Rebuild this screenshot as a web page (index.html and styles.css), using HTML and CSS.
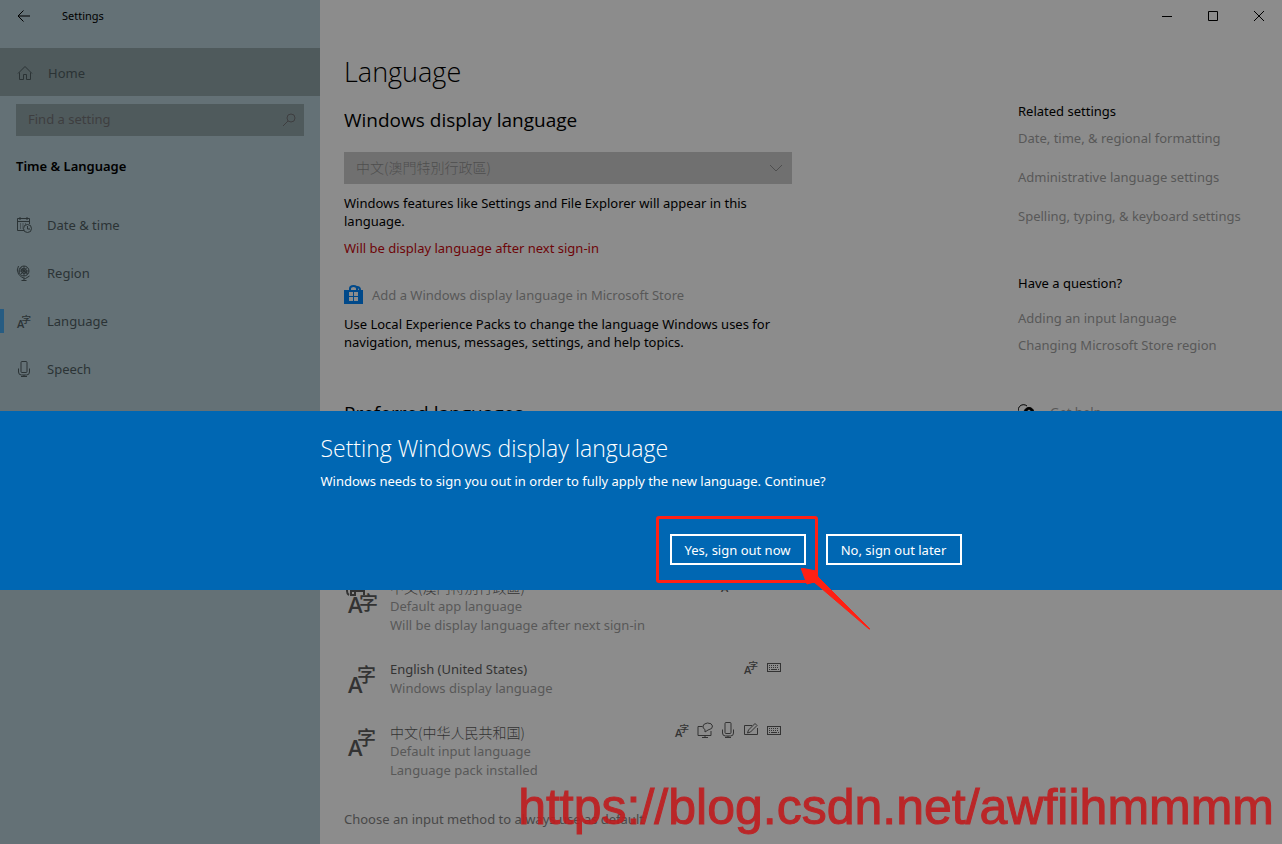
FILE: index.html
```html
<!DOCTYPE html>
<html lang="en">
<head>
<meta charset="utf-8">
<meta name="viewport" content="width=device-width, initial-scale=1">
<title>Settings</title>
<link rel="stylesheet" href="styles.css">
</head>
<body>
<svg class="sprite" aria-hidden="true">
  <symbol id="i-lang" viewBox="0 0 32 32">
    <text class="glyph-a" x="2" y="30">A</text>
    <text class="glyph-zi" x="11" y="19">字</text>
  </symbol>
  <symbol id="i-mic" viewBox="0 0 16 16">
    <rect x="5" y="0.5" width="6" height="11" rx="1"/>
    <path d="M2.500 7.500v3.500q0 3 3 3h5q3 0 3-3V7.500M8 14v2M5 15.500h6"/>
  </symbol>
  <symbol id="i-keys" viewBox="0 0 16 16">
    <rect x="1.500" y="4.500" width="13" height="8"/>
    <path d="M3 6.500h10M3 8.500h10" stroke-dasharray="1 1"/>
    <path d="M3 10.500h1M5 10.500h6M12 10.500h1"/>
  </symbol>
</svg>

<div class="window">
  <nav class="sidebar">
    <header class="titlebar">
      <button class="back" aria-label="Back">
        <svg class="icon" viewBox="0 0 16 16"><path d="M14 8H2.500M7.500 2.500L2 8l5.500 5.500"/></svg>
      </button>
      <span class="app-name">Settings</span>
    </header>
    <a class="home" href="#">
      <svg class="icon" viewBox="0 0 16 16"><path d="M1 8.500L8 1.500l7 7M2.500 7.500v7h4v-5h3v5h4v-7"/></svg>
      Home
    </a>
    <label class="search">
      <input type="text" placeholder="Find a setting" aria-label="Find a setting">
      <svg class="icon" viewBox="0 0 16 16"><circle cx="10" cy="6" r="4"/><path d="M7 9l-5 5"/></svg>
    </label>
    <h2 class="group">Time &amp; Language</h2>
    <ul class="menu">
      <li><a href="#">
        <svg class="icon" viewBox="0 0 16 16"><path d="M8 13.500H1.500v-12h12V7M1.500 4.500h12M4 0v3M11 0v3"/><path d="M4 7h7M4 9h4M4 11h3" stroke-dasharray="1 1.500"/><circle cx="11.500" cy="11.500" r="4"/><path d="M11.500 9v3H14"/></svg>
        Date &amp; time</a></li>
      <li><a href="#">
        <svg class="icon" viewBox="0 0 16 16"><circle cx="8" cy="6" r="5"/><path d="M4 3.500l8 5M5 9l6-6.500M5.500 2.500l5.500 7M8 1v10M3 6h10M2.500 1Q0 5 2.500 9t7 4.500l4-2.500M8 13v2M5.500 15.500h5"/><circle cx="8" cy="6" r="2.500"/></svg>
        Region</a></li>
      <li class="current"><a href="#" aria-current="page">
        <svg class="icon"><use href="#i-lang"/></svg>
        Language</a></li>
      <li><a href="#">
        <svg class="icon"><use href="#i-mic"/></svg>
        Speech</a></li>
    </ul>
  </nav>

  <div class="page">
    <div class="caption">
      <button aria-label="Minimize"><svg viewBox="0 0 12 12"><path d="M1 6.500h10"/></svg></button>
      <button aria-label="Maximize"><svg viewBox="0 0 12 12"><path d="M1.500 1.500h9v9h-9z"/></svg></button>
      <button aria-label="Close"><svg viewBox="0 0 12 12"><path d="M1 1l10 10M11 1L1 11"/></svg></button>
    </div>
    <div class="columns">
      <main class="content">
        <h1>Language</h1>
        <h2>Windows display language</h2>
        <select class="picker" aria-label="Windows display language">
          <option>中文(澳門特別行政區)</option>
        </select>
        <p class="note">Windows features like Settings and File Explorer will appear in this language.</p>
        <p class="warning">Will be display language after next sign-in</p>
        <a class="store" href="#">
          <svg class="bag" viewBox="0 0 20 20"><path d="M6 5V3.500Q6 1 9.500 1T13 3.500V5M13 2q3 0 3 3" class="handle"/><path class="body" d="M0 5h19v14H0z"/><path class="panes" d="M5 7h4v4H5zM10 7h4v4h-4zM5 12h4v4H5zM10 12h4v4h-4z"/></svg>
          Add a Windows display language in Microsoft Store
        </a>
        <p class="about">Use Local Experience Packs to change the language Windows uses for navigation, menus, messages, settings, and help topics.</p>
        <h2 class="preferred">Preferred languages</h2>
        <ul class="languages">
          <li>
            <svg class="lang" viewBox="0 0 32 32">
              <path class="plus" d="M1 4v6q0 3 2 4M5 7v7h4M5 10h13M9 4v11M13 4v7M18 7v7"/>
              <text class="glyph-a" x="2" y="32">A</text>
              <text class="glyph-zi" x="13" y="29">字</text>
            </svg>
            <div class="info"><strong>中文(澳門特別行政區)</strong><span>Default app language</span><span>Will be display language after next sign-in</span></div>
            <div class="features">
              <svg class="icon"><use href="#i-lang"/></svg>
              <svg class="icon"><use href="#i-keys"/></svg>
              <svg class="icon"><use href="#i-keys"/></svg>
            </div>
          </li>
          <li>
            <svg class="lang"><use href="#i-lang"/></svg>
            <div class="info"><strong>English (United States)</strong><span>Windows display language</span></div>
            <div class="features">
              <svg class="icon"><use href="#i-lang"/></svg>
              <svg class="icon"><use href="#i-keys"/></svg>
            </div>
          </li>
          <li>
            <svg class="lang"><use href="#i-lang"/></svg>
            <div class="info"><strong lang="zh-CN">中文(中华人民共和国)</strong><span>Default input language</span><span>Language pack installed</span></div>
            <div class="features">
              <svg class="icon"><use href="#i-lang"/></svg>
              <svg class="icon" viewBox="0 0 16 16"><path d="M5.500 4.500H1v9h13V9M5 15.500h6M8 13.500v2"/><path d="M8 7.500Q5.500 6.500 6 4t4.500-3q4.500 0 5 3t-4.500 4l-3 2z"/></svg>
              <svg class="icon"><use href="#i-mic"/></svg>
              <svg class="icon" viewBox="0 0 16 16"><path d="M9 3.500H1.500v9h13V6"/><path d="M4.500 11l1-3L12 1.500l2 2L7.500 10z"/></svg>
              <svg class="icon"><use href="#i-keys"/></svg>
            </div>
          </li>
        </ul>
        <a class="default-input" href="#">Choose an input method to always use as default</a>
      </main>
      <aside class="related">
        <h3>Related settings</h3>
        <ul class="spaced">
          <li><a href="#">Date, time, &amp; regional formatting</a></li>
          <li><a href="#">Administrative language settings</a></li>
          <li><a href="#">Spelling, typing, &amp; keyboard settings</a></li>
        </ul>
        <h3>Have a question?</h3>
        <ul class="questions">
          <li><a href="#">Adding an input language</a></li>
          <li><a href="#">Changing Microsoft Store region</a></li>
        </ul>
        <a class="help" href="#">
          <svg class="icon" viewBox="0 0 16 16"><path d="M2 10a5 5 0 1 1 7-8"/><circle class="solid" cx="11" cy="8.500" r="5"/><path class="mark" d="M9.500 7q1.500-2 3 0"/></svg>
          Get help
        </a>
      </aside>
    </div>
  </div>

  <section class="dialog" role="dialog" aria-labelledby="dialog-title">
    <div class="dialog-body">
      <h2 id="dialog-title">Setting Windows display language</h2>
      <p>Windows needs to sign you out in order to fully apply the new language. Continue?</p>
      <div class="actions">
        <div class="marked">
          <button>Yes, sign out now</button>
          <span class="frame"></span>
          <svg class="arrow" viewBox="0 0 70 62"><path d="M0 0l15 3 2 6 52 52h-1L13 14l-7 2z"/></svg>
        </div>
        <button>No, sign out later</button>
      </div>
    </div>
  </section>
  <div class="watermark">https://blog.csdn.net/awfiihmmmm</div>
</div>
</body>
</html>
```
FILE: styles.css
```css
* { box-sizing: border-box; }
body {
  margin: 0;
  background: #8c8c8c;
  color: #000;
  font: 13px/18px "Noto Sans", "Noto Sans CJK TC", sans-serif;
}
h1, h2, h3, p, ul { margin: 0; padding: 0; font-weight: 400; }
ul { list-style: none; }
a { color: inherit; text-decoration: none; }
button { margin: 0; padding: 0; border: 0; background: none; color: inherit; font: inherit; }
svg { flex: none; fill: none; stroke: currentColor; }
.sprite { display: none; }
.icon { width: 16px; height: 16px; }
.glyph-a, .glyph-zi { fill: currentColor; stroke: none; }
.glyph-a { font: 600 22px "Open Sans", sans-serif; }
.glyph-zi { font: 500 19px "Noto Sans CJK SC", sans-serif; }

.window { position: relative; display: flex; min-height: 100vh; overflow: hidden; }
.sidebar { flex: none; width: 320px; background: #647176; color: #2b3335; }
.titlebar { display: flex; align-items: center; height: 48px; padding: 0 16px 16px; color: #000; }
.back { width: 16px; height: 16px; margin-right: 30px; }
.app-name { font-size: 11px; }
.home {
  display: flex; align-items: center; gap: 15px;
  height: 48px; padding: 2px 17px 0; background: #4f5a5c;
}
.search {
  display: flex; align-items: center; height: 32px; margin: 8px 16px 0;
  padding: 0 7px 0 12px; background: #4f5a5c; color: #3e3e40;
}
.search input {
  flex: 1; min-width: 0; padding: 0 0 2px; border: 0; outline: 0;
  background: none; color: inherit; font: inherit;
}
.search input::placeholder { color: inherit; opacity: 1; }
.group { margin: 21px 16px 0; color: #000; font-size: 13px; font-weight: 600; }
.menu { margin-top: 26px; }
.menu a { display: flex; align-items: center; gap: 15px; height: 48px; padding: 0 0 1px 16px; }
.menu .current {
  background: linear-gradient(#275c82, #275c82) left center / 4px 24px no-repeat;
}

.page { flex: 1; min-width: 0; }
.caption { display: flex; justify-content: flex-end; height: 32px; }
.caption button { display: grid; place-items: center; width: 46px; height: 32px; }
.caption svg { width: 12px; height: 12px; }
.columns { display: flex; justify-content: space-between; padding: 0 24px; }
.content { width: 448px; }
.content h1 { margin-top: 23px; font: 300 27px/34px "Open Sans", sans-serif; }
.content h2 { margin-top: 18px; font: 19px/26px "Open Sans", sans-serif; }
.picker {
  appearance: none; display: block; width: 100%; height: 32px; margin-top: 19px;
  padding: 0 12px 2px; border: 0; border-radius: 0; color: #4e4e4e; opacity: 1;
  font: 300 14px/18px "Noto Sans CJK TC", sans-serif;
  background: #707070 url("data:image/svg+xml,%3Csvg xmlns='http://www.w3.org/2000/svg' width='12' height='8' fill='none' stroke='%234e4e4e'%3E%3Cpath d='M0 1l6 6 6-6'/%3E%3C/svg%3E") no-repeat right 10px center;
}
.note { margin-top: 10px; }
.warning { margin-top: 9px; color: #6e0508; }
.store { display: flex; align-items: center; gap: 8px; margin-top: 28px; color: #585858; }
.bag { width: 20px; height: 20px; }
.handle { stroke: #00498a; stroke-width: 2; }
.body { fill: #00498a; stroke: none; }
.panes { fill: #8c8c8c; stroke: none; }
.about { margin-top: 10px; }
.content .preferred { margin-top: 49px; }
.languages { display: grid; gap: 25px; margin-top: 152px; }
.languages li { display: flex; align-items: flex-start; color: #333; }
.lang { width: 32px; height: 32px; margin: 3px 12px 0 2px; overflow: visible; }
.plus { stroke-width: 2; }
.info { flex: 1; display: grid; grid-auto-rows: 19px; line-height: 19px; }
.info strong { font-weight: 400; }
.info strong:lang(zh-CN), .languages li:first-child strong { font: 300 14px/18px "Noto Sans CJK SC", sans-serif; }
.info span { color: #585858; }
.features { display: flex; gap: 7px; margin: -1px 10px 0 0; }
.default-input { display: block; margin-top: 30px; color: #484848; }

.related { width: 240px; padding-top: 70px; color: #585858; }
.related h3 { color: #000; font-size: 13px; }
.spaced { display: grid; gap: 21px; margin: 9px 0 49px; }
.questions { display: grid; gap: 9px; margin-top: 17px; }
.help { display: flex; align-items: center; gap: 16px; margin-top: 49px; }
.help .icon { color: #000; }
.solid { fill: #000; }
.mark { stroke: #8c8c8c; }

.dialog {
  position: absolute; top: 411px; left: 0; right: 0;
  padding: 20px 0 25px; background: #0067b3; color: #fff;
}
.dialog-body { width: 50%; margin: 0 auto; }
.dialog h2 { font: 300 23px/34px "Open Sans", sans-serif; }
.dialog p { margin-top: 7px; white-space: nowrap; }
.actions { display: flex; justify-content: flex-end; gap: 20px; margin-top: 44px; }
.actions button { width: 136px; height: 31px; border: 2px solid #fff; }
.marked { position: relative; }
.frame { position: absolute; inset: -18px -12px -18px -14px; border: 3px solid #ff2013; border-radius: 3px; }
.arrow { position: absolute; top: 34px; left: 131px; width: 70px; height: 62px; }
.arrow path { fill: #ff2013; stroke: #ff2013; }
.watermark {
  position: absolute; right: 8px; bottom: 9px;
  color: #c01c1e; font: 50px/56px "Liberation Sans", Arial, sans-serif;
  -webkit-text-stroke: 1px #c01c1e; opacity: .9;
}
```
